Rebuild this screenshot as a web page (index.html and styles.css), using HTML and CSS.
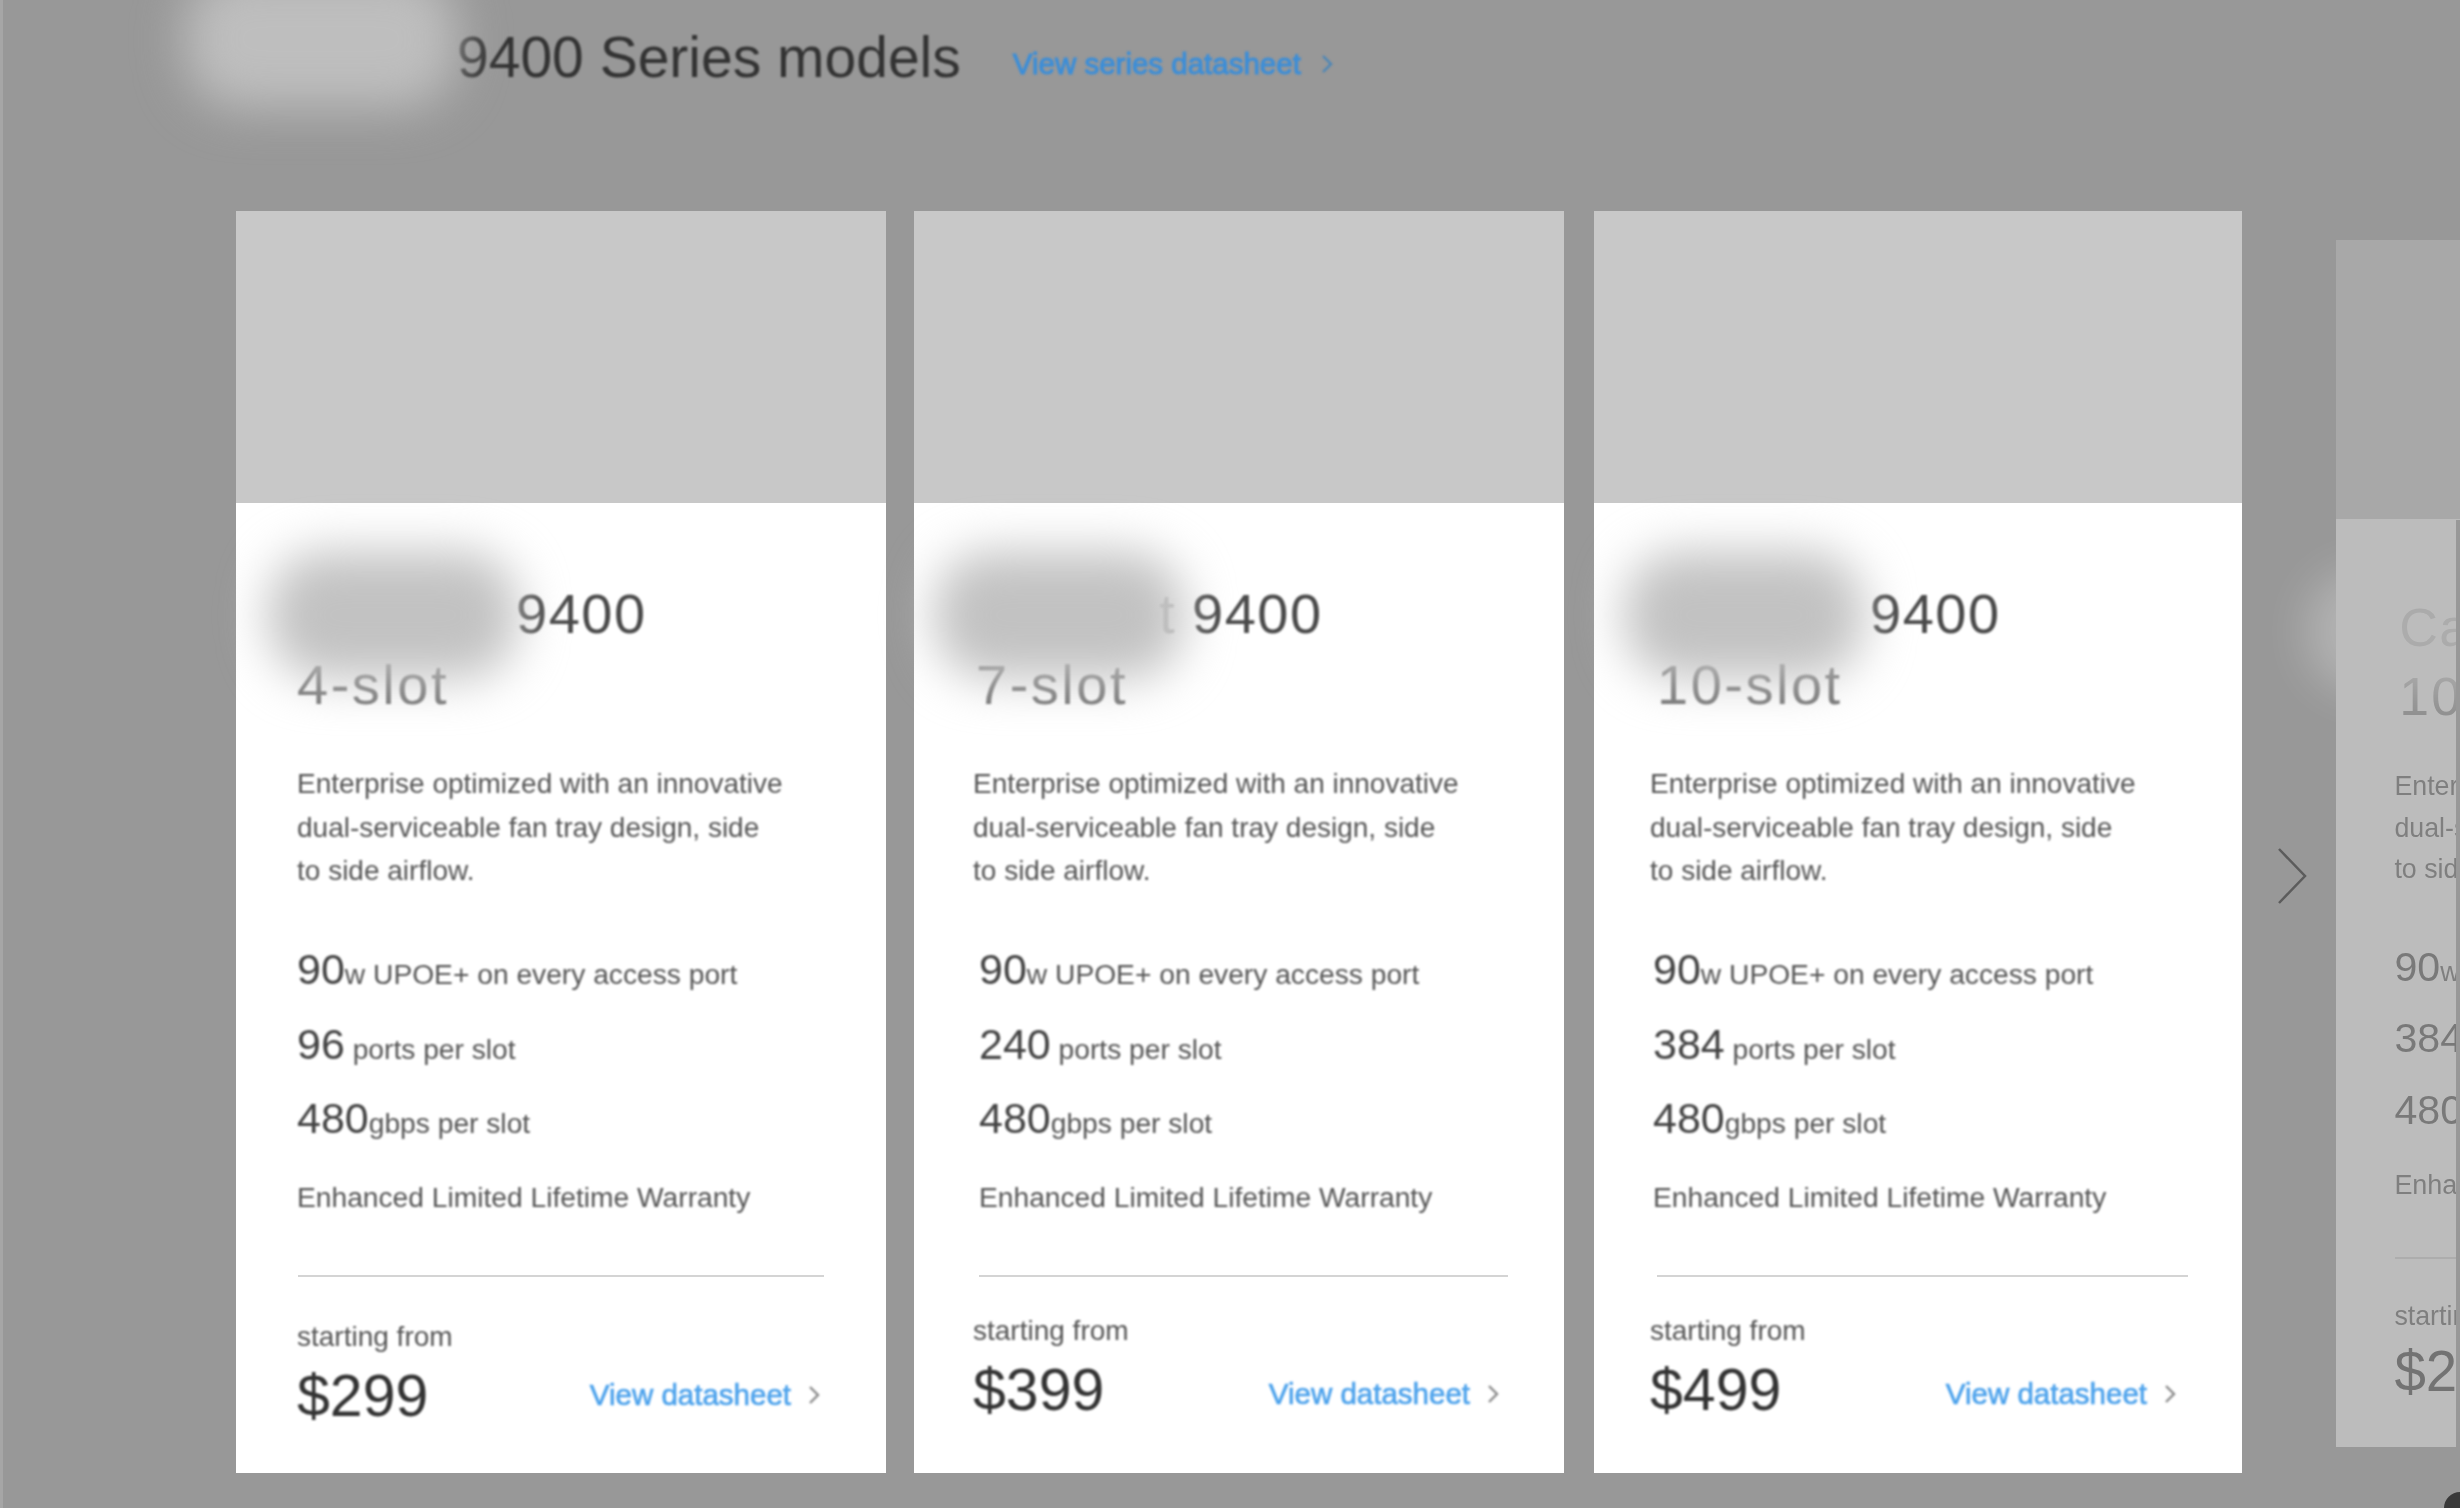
FILE: index.html
```html
<!DOCTYPE html>
<html lang="en">
<head>
    <meta charset="UTF-8">
    <meta name="viewport" content="width=device-width, initial-scale=1.0">
    <title>9400 Series models</title>
    <link rel="stylesheet" href="styles.css">
</head>
<body>
    <div class="page">
        <div class="header-blob"></div>
        <div class="header">
            <h2>9400 Series models</h2>
            <a class="link series-link" href="#">View series datasheet
                <svg class="chev" viewBox="0 0 12 20"><path d="M2 2l8 8-8 8"/></svg>
            </a>
        </div>

        <div class="cards">
            <div class="card card-one">
                <div class="card-img"></div>
                <div class="blob"></div>
                <div class="card-body">
                    <div class="title"><span class="mask"></span>9400</div>
                    <div class="slot">4-slot</div>
                    <p class="desc">Enterprise optimized with an innovative<br>dual-serviceable fan tray design, side<br>to side airflow.</p>
                    <div class="stat"><b>90</b>w UPOE+ on every access port</div>
                    <div class="stat"><b>96</b> ports per slot</div>
                    <div class="stat"><b>480</b>gbps per slot</div>
                    <div class="stat stat-note">Enhanced Limited Lifetime Warranty</div>
                    <div class="rule"></div>
                    <div class="foot">
                        <div>
                            <div class="from">starting from</div>
                            <div class="price">$299</div>
                        </div>
                        <a class="link" href="#">View datasheet
                            <svg class="chev" viewBox="0 0 12 20"><path d="M2 2l8 8-8 8"/></svg>
                        </a>
                    </div>
                </div>
            </div>

            <div class="card card-two">
                <div class="card-img"></div>
                <div class="blob"></div>
                <div class="card-body">
                    <div class="title"><span class="mask"><span class="ghost">t</span></span>9400</div>
                    <div class="slot">7-slot</div>
                    <p class="desc">Enterprise optimized with an innovative<br>dual-serviceable fan tray design, side<br>to side airflow.</p>
                    <div class="stat"><b>90</b>w UPOE+ on every access port</div>
                    <div class="stat"><b>240</b> ports per slot</div>
                    <div class="stat"><b>480</b>gbps per slot</div>
                    <div class="stat stat-note">Enhanced Limited Lifetime Warranty</div>
                    <div class="rule"></div>
                    <div class="foot">
                        <div>
                            <div class="from">starting from</div>
                            <div class="price">$399</div>
                        </div>
                        <a class="link" href="#">View datasheet
                            <svg class="chev" viewBox="0 0 12 20"><path d="M2 2l8 8-8 8"/></svg>
                        </a>
                    </div>
                </div>
            </div>

            <div class="card card-three">
                <div class="card-img"></div>
                <div class="blob"></div>
                <div class="card-body">
                    <div class="title"><span class="mask"></span>9400</div>
                    <div class="slot">10-slot</div>
                    <p class="desc">Enterprise optimized with an innovative<br>dual-serviceable fan tray design, side<br>to side airflow.</p>
                    <div class="stat"><b>90</b>w UPOE+ on every access port</div>
                    <div class="stat"><b>384</b> ports per slot</div>
                    <div class="stat"><b>480</b>gbps per slot</div>
                    <div class="stat stat-note">Enhanced Limited Lifetime Warranty</div>
                    <div class="rule"></div>
                    <div class="foot">
                        <div>
                            <div class="from">starting from</div>
                            <div class="price">$499</div>
                        </div>
                        <a class="link" href="#">View datasheet
                            <svg class="chev" viewBox="0 0 12 20"><path d="M2 2l8 8-8 8"/></svg>
                        </a>
                    </div>
                </div>
            </div>

            <div class="next">
                <svg viewBox="0 0 30 58"><path d="M2 2l26 27L2 56"/></svg>
            </div>

            <div class="card card-four">
                <div class="card-img"></div>
                <div class="blob"></div>
                <div class="card-body">
                    <div class="title">Ca</div>
                    <div class="slot">10-slot</div>
                    <p class="desc">Enterprise optimized with an innovative<br>dual-serviceable fan tray design, side<br>to side airflow.</p>
                    <div class="stat"><b>90</b>w UPOE+ on every access port</div>
                    <div class="stat"><b>384</b> ports per slot</div>
                    <div class="stat"><b>480</b>gbps per slot</div>
                    <div class="stat stat-note">Enhanced Limited Lifetime Warranty</div>
                    <div class="rule"></div>
                    <div class="foot">
                        <div>
                            <div class="from">starting from</div>
                            <div class="price">$299</div>
                        </div>
                    </div>
                </div>
            </div>
        </div>
    </div>
</body>
</html>
```

FILE: styles.css
```css
html, body {
    margin: 0;
    padding: 0;
}
body {
    font-family: "Liberation Sans", Arial, sans-serif;
    background-color: #989898;
}
.page {
    position: relative;
    width: 2460px;
    height: 1508px;
    overflow: hidden;
    box-sizing: border-box;
    border-left: 3px solid #a6a6a6;
    padding-left: 233px;
}
/* window corner, bottom right */
.page::after {
    content: "";
    position: absolute;
    right: -16px;
    bottom: -16px;
    width: 32px;
    height: 32px;
    border-radius: 50%;
    background-color: #3a3a3a;
    z-index: 3;
}
/* strip at the right edge where the last card stops */
.page::before {
    content: "";
    position: absolute;
    right: 0;
    top: 520px;
    bottom: 0;
    width: 4px;
    background-color: #989898;
    z-index: 2;
}
.header {
    height: 211px;
    display: flex;
    align-items: flex-start;
    padding-left: 221px;
}
.header h2 {
    margin: 22px 0 0;
    font-size: 57px;
    line-height: 70px;
    font-weight: normal;
    color: #333;
    white-space: nowrap;
    filter: blur(0.8px);
}
.header-blob {
    position: absolute;
    left: 182px;
    top: -30px;
    width: 272px;
    height: 138px;
    border-radius: 56px;
    background-color: #bebebe;
    filter: blur(24px);
    z-index: 2;
}
.link {
    display: flex;
    align-items: center;
    gap: 17px;
    font-size: 29.5px;
    line-height: 40px;
    color: #4ea3ec;
    text-decoration: none;
    white-space: nowrap;
    filter: blur(0.8px);
    -webkit-text-stroke: 0.7px #4ea3ec;
}
.series-link {
    margin: 44px 0 0 52px;
    color: #3c8ed8;
    -webkit-text-stroke: 1px #3c8ed8;
    gap: 20px;
}
.chev {
    width: 12px;
    height: 20px;
    flex-shrink: 0;
}
.chev path {
    fill: none;
    stroke: #8a8a8a;
    stroke-width: 2.4;
}
.series-link .chev path {
    stroke: #4a86b8;
}
.cards {
    display: flex;
    align-items: flex-start;
}
.card {
    position: relative;
    flex-shrink: 0;
    width: 650px;
    height: 1262px;
    background-color: #fff;
}
.card-two {
    margin-left: 28px;
}
.card-three {
    margin-left: 30px;
    width: 648px;
}
.card-img {
    height: 292px;
    background-color: #c8c8c8;
}
.blob {
    position: absolute;
    left: 32px;
    top: 340px;
    width: 250px;
    height: 128px;
    border-radius: 56px;
    background-color: #c2c2c2;
    filter: blur(24px);
    z-index: 1;
}
.card-two .blob {
    left: 20px;
}
.card-three .blob {
    left: 30px;
    width: 240px;
}
.card-body {
    padding: 75px 62px 0 61px;
}
.title, .slot {
    font-size: 56px;
    line-height: 71px;
    letter-spacing: 1.5px;
    color: #4a4a4a;
    filter: blur(0.8px);
    white-space: nowrap;
}
.mask {
    display: inline-block;
    width: 219px;
    text-align: right;
    padding-right: 16px;
    box-sizing: border-box;
}
.ghost {
    color: #b5b5b5;
    position: relative;
    z-index: 2;
}
.slot {
    letter-spacing: 2.5px;
    color: #777;
}
.desc {
    margin: 42px 0 39.5px;
    font-size: 28px;
    line-height: 43.5px;
    color: #555;
    white-space: nowrap;
    filter: blur(0.8px);
}
.stat {
    height: 74.5px;
    line-height: 74.5px;
    font-size: 28.2px;
    color: #555;
    white-space: nowrap;
    filter: blur(0.8px);
}
.stat b {
    font-size: 43px;
    font-weight: normal;
    color: #444;
}
.stat-note {
    margin-top: 4.5px;
}
.rule {
    height: 2px;
    margin: 40px 0 0 1px;
    background-color: #d4d4d4;
}
.foot {
    display: flex;
    justify-content: space-between;
    align-items: flex-end;
    margin-top: 40px;
}
.from {
    font-size: 28px;
    line-height: 40px;
    color: #555;
    filter: blur(0.8px);
}
.price {
    font-size: 59px;
    line-height: 78px;
    color: #333;
    filter: blur(0.8px);
}
.foot .link {
    margin-bottom: 20px;
    margin-right: 4px;
}

/* cards two and three are a few px off, as in the source */
.card-two .card-body {
    padding-left: 59px;
    padding-right: 56px;
}
.card-two .stat {
    padding-left: 6px;
}
.card-two .title, .card-two .slot {
    padding-left: 3px;
}
.card-two .mask {
    width: 216px;
}
.card-two .rule {
    margin-left: 6px;
}
.card-two .foot {
    margin-top: 34px;
    margin-right: 9px;
}
.card-two .foot .link, .card-three .foot .link {
    margin-bottom: 15px;
    margin-right: 0;
}
.card-three .card-body {
    padding-left: 56px;
    padding-right: 54px;
}
.card-three .stat {
    padding-left: 3px;
}
.card-three .title, .card-three .slot {
    padding-left: 7px;
}
.card-three .mask {
    width: 213px;
}
.card-three .rule {
    margin-left: 7px;
}
.card-three .foot {
    margin-top: 34px;
    margin-right: 12px;
}
.next {
    flex-shrink: 0;
    width: 94px;
    padding-top: 636px;
    display: flex;
    justify-content: center;
    padding-left: 6px;
    box-sizing: border-box;
}
.next svg {
    width: 30px;
    height: 58px;
}
.next path {
    fill: none;
    stroke: #5c5c5c;
    stroke-width: 2.5;
}
.card-four {
    zoom: 0.957;
    margin-top: 30px;
    opacity: 0.36;
}
.card-four .blob {
    left: -30px;
    width: 260px;
    top: 345px;
    background-color: #fff;
    opacity: 0.75;
}
.card-four .title, .card-four .slot {
    padding-left: 5px;
}
.card-four .title {
    padding-top: 2px;
    line-height: 73px;
}
.card-four .desc {
    margin-top: 37px;
    margin-bottom: 43px;
}
.card-four .rule {
    margin-top: 37px;
}
```
